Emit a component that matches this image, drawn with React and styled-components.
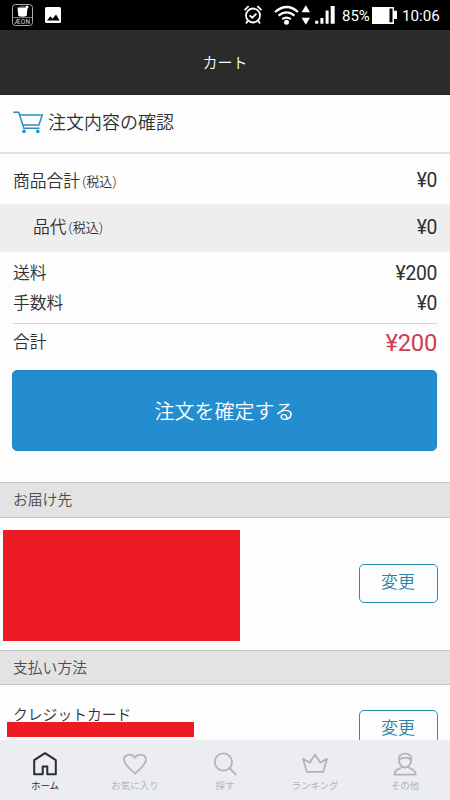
import React from 'react';
import styled, { createGlobalStyle } from 'styled-components';

const GlobalStyle = createGlobalStyle`
  * {
    box-sizing: border-box;
  }
  body {
    margin: 0;
    background: #fdfdfd;
    color: #303030;
    font-family: Roboto, "Noto Sans CJK JP", sans-serif;
  }
`;

const Screen = styled.div`
  display: flex;
  flex-direction: column;
  width: 450px;
  height: 800px;
  overflow: hidden;
`;

const StatusBar = styled.div`
  flex: none;
  display: flex;
  justify-content: space-between;
  height: 30px;
  padding: 0 9px 0 12px;
  background: #000;
  color: #fff;
`;

const StatusIcons = styled.svg`
  display: block;
  height: 30px;
`;

const StatusGroup = styled.div`
  display: flex;
  align-items: center;
`;

const StatusText = styled.span`
  font-size: ${({ $size }) => $size}px;
  line-height: 30px;
  padding-top: 1px;
  width: ${({ $width }) => $width}px;
  white-space: nowrap;
`;

const Header = styled.header`
  flex: none;
  height: 65px;
  background: #2b2b2b;
  border-bottom: 1px solid #222;
  color: #fff;
  font-size: 15px;
  font-weight: 350;
  line-height: 66px;
  text-align: center;
`;

const Content = styled.main`
  flex: 1;
  min-height: 0;
  overflow: hidden;
  font-weight: 350;
`;

const PageTitle = styled.h1`
  display: flex;
  align-items: center;
  gap: 4px;
  height: 59px;
  margin: 0;
  padding: 0 12px 5px;
  border-bottom: 2px solid #e0e0e0;
  font-size: 18px;
  font-weight: 350;

  svg {
    margin-top: 2px;
  }
`;

const Row = styled.div`
  display: flex;
  justify-content: space-between;
  align-items: center;
  height: ${({ $height }) => $height}px;
  padding: 0 13px;
  font-size: 16.8px;
`;

const SubtotalRow = styled(Row)`
  padding-top: 3px;
`;

const ShadedRow = styled(Row)`
  padding-left: 33px;
  padding-bottom: 2px;
  background: #eee;
`;

const Label = styled.span`
  padding-bottom: 2px;
`;

const Tax = styled.small`
  margin-left: 2px;
  font-size: 13px;
  vertical-align: 1px;
`;

const Price = styled.span`
  font-size: 19.3px;
  font-weight: 400;
  letter-spacing: -0.3px;
`;

const Fees = styled.div`
  height: 71px;
  padding-top: 6px;
`;

const TotalRow = styled(Row)`
  margin: 0 13px;
  padding: 0 0 4px;
  border-top: 1px solid #d5d5d5;
`;

const TotalPrice = styled.span`
  padding-top: 3px;
  color: #d03c55;
  font-size: 23.8px;
  font-weight: 400;
  letter-spacing: -0.3px;
`;

const SubmitButton = styled.button`
  display: block;
  width: 425px;
  height: 81px;
  margin: 7px 0 31px 12px;
  padding: 0;
  border: 1px solid #1f86c6;
  border-radius: 5px;
  background: #238dcf;
  color: #fff;
  font: inherit;
  font-size: 20px;
`;

const SectionTitle = styled.h2`
  height: ${({ $height }) => $height}px;
  margin: 0;
  padding: 0 13px;
  border: solid #c6c6c6;
  border-width: 1.5px 0;
  background: #e3e3e3;
  color: #4c4c4c;
  font-size: 14.8px;
  font-weight: 350;
  line-height: 34px;
`;

const Address = styled.section`
  display: flex;
  justify-content: space-between;
  align-items: flex-start;
  height: 132px;
  padding: 12px 12px 0 3px;
`;

const Payment = styled.section`
  display: flex;
  justify-content: space-between;
  align-items: flex-start;
  padding: 19px 12px 0 7px;
`;

const Mask = styled.div`
  width: ${({ $width }) => $width}px;
  height: ${({ $height }) => $height}px;
  background: #ed1c24;
`;

const Method = styled.div`
  height: 18px;
  padding-left: 6px;
  font-size: 14.8px;
  line-height: 22px;
`;

const ChangeButton = styled.button`
  width: 79px;
  height: 39px;
  margin-top: ${({ $top }) => $top}px;
  padding: 0 1px 6px 0;
  border: 1.5px solid #2d8cab;
  border-radius: 5px;
  background: #fdfdfd;
  color: #2a82a6;
  font: inherit;
  font-size: 17px;
`;

const TabBar = styled.nav`
  flex: none;
  display: flex;
  height: 60px;
  background: #ecedf1;
`;

const Tab = styled.a`
  flex: 1;
  display: flex;
  flex-direction: column;
  align-items: center;
  padding-top: 10px;
  color: ${({ $active }) => ($active ? '#2b2c30' : '#b3b4b6')};
  font-size: 9.5px;
  line-height: 14px;

  svg {
    display: block;
    margin-bottom: 1px;
    fill: none;
    stroke: currentColor;
    stroke-width: ${({ $active }) => ($active ? 2 : 1.8)};
    stroke-linejoin: round;
    stroke-linecap: round;
  }
`;

const tabs = [
  { label: 'ホーム', active: true, icon: <path d="M4.2 10.2 15 3.2l10.8 7V24.2h-8.5v-7.6h-4.6v7.6H4.2z" /> },
  { label: 'お気に入り', icon: <path d="M15 23.6C10 18.9 4 14.6 4 9.6 4 4.2 12 2.7 15 7.8c3-5.1 11-3.6 11 1.8C26 14.6 20 18.9 15 23.6z" /> },
  {
    label: '探す',
    icon: (
      <>
        <circle cx="13.4" cy="12" r="8.6" />
        <path d="m19.5 18.2 6.2 6.3" />
      </>
    ),
  },
  { label: 'ランキング', icon: <path d="M6.8 21.8h16.4l3.8-13-6.8 3.8L15 4.4l-5.2 8.2L3 8.8z" /> },
  {
    label: 'その他',
    icon: (
      <>
        <path d="M8.8 9.5C8.8 5.3 11 3.6 15 3.6s6.2 1.7 6.2 5.9c0 3.5-2.2 8-6.2 8s-6.2-4.5-6.2-8z" />
        <path d="M9 9.8c3.3-3 8.7-3 12 0" />
        <path d="M12.3 16.6c0 2.2-8 1.6-8 8.1h21.4c0-6.5-8-5.9-8-8.1" />
      </>
    ),
  },
];

const CartIcon = () => (
  <svg width="32" height="24" viewBox="0 0 32 24" fill="none" stroke="#278fc5" strokeWidth="1.5">
    <path d="M1.3 2.3h5.4l5.2 16h15.5M7.6 4.9h22.7l-3.4 10.2H10.9" />
    <circle cx="12" cy="21.4" r="1.8" fill="#278fc5" stroke="none" />
    <circle cx="25.8" cy="21.4" r="1.8" fill="#278fc5" stroke="none" />
  </svg>
);

const App = () => (
  <>
    <GlobalStyle />
    <Screen>
      <StatusBar>
        <StatusIcons width="50" viewBox="0 0 50 30">
          <rect x=".5" y="4.5" width="20" height="21" rx="3" fill="none" stroke="#aaa" />
          <path d="M5.5 7.5h10l-.8 8.5q-4.2 1.5-8.4 0z" fill="#fff" />
          <circle cx="15" cy="7" r="1.5" fill="#fff" />
          <path d="M8 7q2.5-2 5 0M1 17.5h19" fill="none" stroke="#777" />
          <text x="2.6" y="24" fontSize="6.4" fill="#ddd" textLength="15.5">ÆON</text>
          <rect x="33" y="7" width="16" height="16" rx="1.5" fill="#fff" />
          <path d="m35 20.5 3.4-4.3 2.3 2.6 3.3-4.2 3.6 5.9z" fill="#000" />
        </StatusIcons>
        <StatusGroup>
          <StatusIcons width="99" viewBox="0 0 99 30" fill="#fff">
            <g fill="none" stroke="#fff" strokeWidth="1.8">
              <circle cx="10" cy="15.5" r="7" />
              <path d="m1.6 10.2 4-4M18.4 10.2l-4-4M6.7 15.3l2.6 2.4 4.1-4M5 20.5 3 23.4M15 20.5l2 2.9" />
              <path d="M32 12q12-10 23 0M35.5 15.6q8-6.4 16 0M39.2 19.2q4.3-3.2 8.6 0" strokeWidth="2.2" />
            </g>
            <circle cx="43.5" cy="22.2" r="2.5" />
            <path d="m62.8 5.2 4.2 7h-8.4zM58.6 17.8H67l-4.2 7z" />
            <path d="M72.2 20.8h3v3h-3zM77.4 18h3v5.8h-3zM82.6 10.5h3v13.3h-3zM87.7 6h4v17.8h-4z" />
          </StatusIcons>
          <StatusText $size={15} $width={29}>85%</StatusText>
          <StatusIcons width="31" viewBox="0 0 31 30">
            <path d="M1 7h22v3.7h3v8.3h-3v5H1z" fill="#fff" />
            <path d="M18.5 8.5h3v13.8h-3z" fill="#000" />
          </StatusIcons>
          <StatusText $size={15.2} $width={39}>10:06</StatusText>
        </StatusGroup>
      </StatusBar>
      <Header>カート</Header>
      <Content>
        <PageTitle>
          <CartIcon />
          注文内容の確認
        </PageTitle>
        <SubtotalRow $height={50}>
          <Label>商品合計<Tax>(税込)</Tax></Label>
          <Price>¥0</Price>
        </SubtotalRow>
        <ShadedRow $height={48}>
          <Label>品代<Tax>(税込)</Tax></Label>
          <Price>¥0</Price>
        </ShadedRow>
        <Fees>
          <Row $height={30}>
            <Label>送料</Label>
            <Price>¥200</Price>
          </Row>
          <Row $height={30}>
            <Label>手数料</Label>
            <Price>¥0</Price>
          </Row>
        </Fees>
        <TotalRow $height={40}>
          <Label>合計</Label>
          <TotalPrice>¥200</TotalPrice>
        </TotalRow>
        <SubmitButton>注文を確定する</SubmitButton>
        <SectionTitle $height={36}>お届け先</SectionTitle>
        <Address>
          <Mask $width={237} $height={111} />
          <ChangeButton $top={34}>変更</ChangeButton>
        </Address>
        <SectionTitle $height={35}>支払い方法</SectionTitle>
        <Payment>
          <div>
            <Method>クレジットカード</Method>
            <Mask $width={187} $height={15} />
          </div>
          <ChangeButton $top={6}>変更</ChangeButton>
        </Payment>
      </Content>
      <TabBar>
        {tabs.map(({ label, active, icon }) => (
          <Tab key={label} $active={active}>
            <svg width="30" height="28" viewBox="0 0 30 28">{icon}</svg>
            {label}
          </Tab>
        ))}
      </TabBar>
    </Screen>
  </>
);

export default App;
